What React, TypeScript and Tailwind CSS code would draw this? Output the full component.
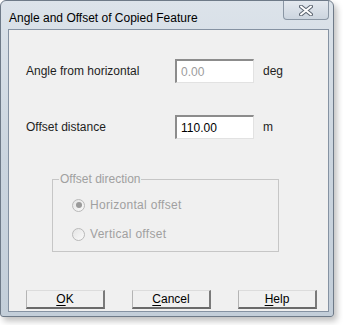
import React from 'react'

function Radio({ checked }: { checked?: boolean }) {
  return (
    <span className="flex h-[13px] w-[13px] items-center justify-center rounded-full border border-[#b9b9b9] bg-gradient-to-br from-[#e4e4e4] to-[#fafafa]">
      {checked && <span className="h-[6px] w-[6px] rounded-full bg-[#9a9a9a]" />}
    </span>
  )
}

function Field({ label, value, unit, dim }: { label: string; value: string; unit: string; dim?: boolean }) {
  return (
    <div className="flex h-[24px] items-center">
      <span className="w-[149px] text-[12px] text-[#1e1e1e]">{label}</span>
      <div className="flex h-[24px] w-[79px] items-center border-t-2 border-l-2 border-r border-b border-t-[#8c8c8c] border-l-[#8c8c8c] border-r-[#e2e2e2] border-b-[#e2e2e2] bg-white pl-[4px]">
        <span className={dim ? 'text-[12px] text-[#9c9c9c]' : 'text-[12px] text-black'}>{value}</span>
      </div>
      <span className="ml-[9px] text-[12px] text-[#1e1e1e]">{unit}</span>
    </div>
  )
}

function Btn({ first, rest }: { first: string; rest: string }) {
  return (
    <button className="flex h-[19px] w-[79px] items-center justify-center border-t border-l border-b-2 border-r-2 border-t-[#dcdcdc] border-l-[#b4b4b4] border-b-[#6a6a6a] border-r-[#7a7a7a] bg-[#f0f0f0] text-[12px] text-black">
      <span className="underline underline-offset-2">{first}</span>
      {rest}
    </button>
  )
}

export default function App() {
  return (
    <div className="h-[325px] w-[343px] bg-white" style={{ fontFamily: '"Liberation Sans", Arial, sans-serif' }}>
      <div className="flex h-[317px] w-[334px] flex-col rounded-t-[6px] rounded-b-[3px] border border-[#6e7a88] bg-gradient-to-b from-[#dce3ea] via-[#cbd5df] to-[#c3ced9] shadow-[3px_4px_6px_rgba(0,0,0,0.25)]">
        {/* title bar */}
        <div className="flex h-[28px] shrink-0 items-start justify-between">
          <span className="mt-[8px] ml-[8px] text-[12px] text-black">
            Angle and Offset of Copied Feature
          </span>
          <div className="mr-[4px] flex h-[19px] w-[46px] items-center justify-center rounded-b-[4px] border border-t-0 border-[#8a96a4] bg-gradient-to-b from-[#e4e9ef] to-[#ccd5df]">
            <svg width="14" height="11" viewBox="0 0 14 11">
              <path d="M2 1.5 L12 9.5 M12 1.5 L2 9.5" stroke="#5d6672" strokeWidth="4" strokeLinecap="round" />
              <path d="M2 1.5 L12 9.5 M12 1.5 L2 9.5" stroke="#ffffff" strokeWidth="2" strokeLinecap="round" />
            </svg>
          </div>
        </div>

        {/* client */}
        <div className="ml-[7px] mr-[4px] mb-[4px] flex flex-1 flex-col border border-[#8592a2] bg-[#f0f0f0] pl-[17px]">
          <div className="mt-[29px] flex flex-col gap-[32px]">
            <Field label="Angle from horizontal" value="0.00" unit="deg" dim />
            <Field label="Offset distance" value="110.00" unit="m" />
          </div>

          <fieldset className="mt-[31px] ml-[26px] h-[82px] w-[227px] border border-[#c6c6c6]">
            <legend className="ml-[6px] px-[1px] text-[12px] text-[#a0a0a0]">Offset direction</legend>
            <div className="pl-[19px] pt-[8px]">
              <div className="flex items-center gap-[5px]">
                <Radio checked />
                <span className="text-[12px] tracking-[0.3px] text-[#a0a0a0]">Horizontal offset</span>
              </div>
              <div className="mt-[11px] flex items-center gap-[5px]">
                <Radio />
                <span className="text-[12px] tracking-[0.3px] text-[#a0a0a0]">Vertical offset</span>
              </div>
            </div>
          </fieldset>

          <div className="mt-[38px] flex gap-[27px]">
            <Btn first="O" rest="K" />
            <Btn first="C" rest="ancel" />
            <Btn first="H" rest="elp" />
          </div>
        </div>
      </div>
    </div>
  )
}
